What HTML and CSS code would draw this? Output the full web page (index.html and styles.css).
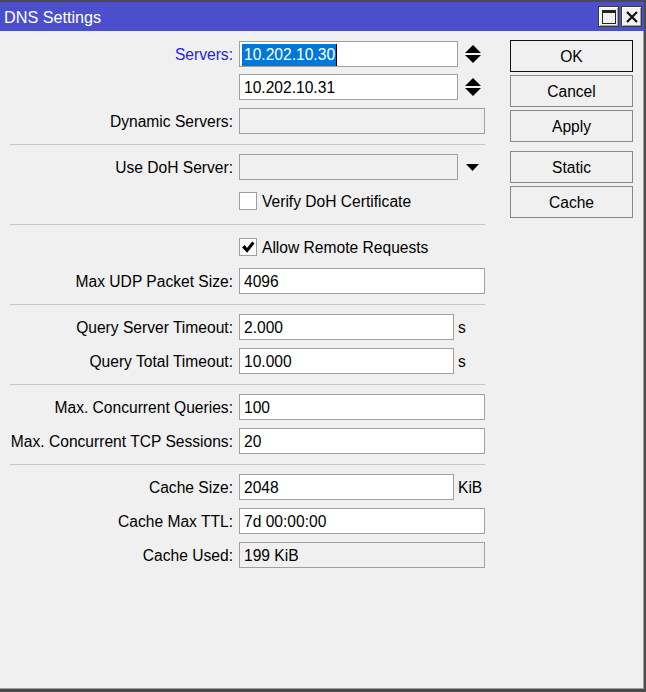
FILE: index.html
```html
<!DOCTYPE html>
<html>
<head>
<meta charset="utf-8">
<link rel="stylesheet" href="styles.css">
</head>
<body>
<div class="window">
  <div class="titlebar">
    <span class="title">DNS Settings</span>
    <div class="tbtns">
      <span class="tbtn"><svg width="14" height="14" viewBox="0 0 14 14"><rect x="0.5" y="0.5" width="13" height="13" fill="none" stroke="#222" stroke-width="1"/><rect x="0" y="0" width="14" height="3" fill="#222"/></svg></span>
      <span class="tbtn"><svg width="12" height="12" viewBox="0 0 12 12"><path d="M1 1 L11 11 M11 1 L1 11" stroke="#111" stroke-width="2.2"/></svg></span>
    </div>
  </div>
  <div class="body">
    <div class="form">
      <div class="row first">
        <span class="lbl blue">Servers:</span>
        <div class="field">
          <div class="input w-spin"><span class="sel">10.202.10.30</span><span class="caret"></span></div>
          <svg class="spin" width="16" height="18" viewBox="0 0 16 18"><polygon points="8,0 16,8 0,8" fill="#000"/><polygon points="0,10 16,10 8,18" fill="#000"/></svg>
        </div>
      </div>
      <div class="row">
        <span class="lbl"></span>
        <div class="field">
          <div class="input w-spin">10.202.10.31</div>
          <svg class="spin" width="16" height="18" viewBox="0 0 16 18"><polygon points="8,0 16,8 0,8" fill="#000"/><polygon points="0,10 16,10 8,18" fill="#000"/></svg>
        </div>
      </div>
      <div class="row">
        <span class="lbl">Dynamic Servers:</span>
        <div class="field"><div class="input w-full disabled"></div></div>
      </div>
      <div class="sep"></div>
      <div class="row">
        <span class="lbl">Use DoH Server:</span>
        <div class="field">
          <div class="input w-spin disabled"></div>
          <svg class="drop" width="13" height="7" viewBox="0 0 13 7"><polygon points="0,0 13,0 6.5,7" fill="#000"/></svg>
        </div>
      </div>
      <div class="row">
        <span class="lbl"></span>
        <div class="field"><span class="check"></span><span class="ctext">Verify DoH Certificate</span></div>
      </div>
      <div class="sep"></div>
      <div class="row">
        <span class="lbl"></span>
        <div class="field"><span class="check"><svg width="16" height="16" viewBox="0 0 16 16"><polygon points="2,8.5 4.8,6 7,9 12.2,2.5 14.5,4.5 7.2,13.8" fill="#000"/></svg></span><span class="ctext">Allow Remote Requests</span></div>
      </div>
      <div class="row">
        <span class="lbl">Max UDP Packet Size:</span>
        <div class="field"><div class="input w-full">4096</div></div>
      </div>
      <div class="sep"></div>
      <div class="row">
        <span class="lbl">Query Server Timeout:</span>
        <div class="field"><div class="input w-unit">2.000</div><span class="unit">s</span></div>
      </div>
      <div class="row">
        <span class="lbl">Query Total Timeout:</span>
        <div class="field"><div class="input w-unit">10.000</div><span class="unit">s</span></div>
      </div>
      <div class="sep"></div>
      <div class="row">
        <span class="lbl">Max. Concurrent Queries:</span>
        <div class="field"><div class="input w-full">100</div></div>
      </div>
      <div class="row">
        <span class="lbl">Max. Concurrent TCP Sessions:</span>
        <div class="field"><div class="input w-full">20</div></div>
      </div>
      <div class="sep"></div>
      <div class="row">
        <span class="lbl">Cache Size:</span>
        <div class="field"><div class="input w-unit">2048</div><span class="unit">KiB</span></div>
      </div>
      <div class="row">
        <span class="lbl">Cache Max TTL:</span>
        <div class="field"><div class="input w-full">7d 00:00:00</div></div>
      </div>
      <div class="row">
        <span class="lbl">Cache Used:</span>
        <div class="field"><div class="input w-full disabled">199 KiB</div></div>
      </div>
    </div>
    <div class="buttons">
      <div class="btn default">OK</div>
      <div class="btn">Cancel</div>
      <div class="btn">Apply</div>
      <div class="btn gap">Static</div>
      <div class="btn">Cache</div>
    </div>
  </div>
</div>
</body>
</html>
```
FILE: styles.css
```css
* { box-sizing: border-box; }
html, body { margin: 0; padding: 0; }
body {
  width: 646px;
  height: 692px;
  overflow: hidden;
  background: #f0f0f0;
  font-family: "Liberation Sans", Arial, sans-serif;
  font-size: 15.6px;
  color: #000;
}
.window {
  width: 646px;
  height: 692px;
  background: #f0f0f0;
  border-top: 2px solid #4a4a4a;
  border-right: 2px solid #4a4a4a;
  border-bottom: 3px solid #4a4a4a;
  box-shadow: inset -1px -1px 0 #a0a0a0;
  display: flex;
  flex-direction: column;
}
.titlebar {
  height: 29px;
  background: #4b4fcc;
  display: flex;
  align-items: center;
  justify-content: space-between;
  padding: 0 2px 0 4px;
}
.title {
  color: #fff;
  font-size: 16.2px;
  padding-top: 2px;
}
.tbtns {
  display: flex;
  gap: 2px;
}
.tbtn {
  width: 21px;
  height: 21px;
  background: #f0f0f0;
  border: 1px solid #3a3a3a;
  box-shadow: inset 1px 1px 0 #fff, inset -1px -1px 0 #a0a0a0;
  display: flex;
  align-items: center;
  justify-content: center;
}
.body {
  display: flex;
  align-items: flex-start;
  padding-top: 10px;
}
.form {
  padding-left: 10px;
  width: 485px;
  display: flex;
  flex-direction: column;
}
.row {
  display: grid;
  grid-template-columns: 223px 246px;
  column-gap: 6px;
  height: 26px;
  align-items: center;
  margin-bottom: 8px;
}
.row.first { margin-bottom: 7px; }
.lbl {
  text-align: right;
  white-space: nowrap;
  padding-top: 2px;
}
.lbl.blue { color: #2222ee; }
.field {
  display: flex;
  align-items: center;
  height: 26px;
}
.input {
  height: 26px;
  border: 1px solid #a0a0a0;
  background: #fff;
  padding: 1px 4px 0 4px;
  display: flex;
  align-items: center;
  white-space: nowrap;
}
.input.disabled { background: #f0f0f0; }
.w-full { width: 246px; }
.w-spin { width: 219px; }
.w-unit { width: 215px; }
.sel {
  background: #0078d7;
  color: #fff;
  margin-left: -2px;
  padding: 2px 1px 2px 2px;
  line-height: 18px;
}
.caret {
  width: 1px;
  height: 22px;
  background: #000;
}
.spin { margin-left: 7px; }
.drop { margin-left: 8px; }
.unit { margin-left: 4px; padding-top: 2px; }
.check {
  width: 18px;
  height: 18px;
  border: 1px solid #a0a0a0;
  background: #fff;
  display: flex;
  align-items: center;
  justify-content: center;
}
.ctext { margin-left: 5px; padding-top: 2px; }
.sep {
  height: 1px;
  width: 475px;
  background: #c8c8c8;
  margin: 2px 0 9px 0;
}
.buttons {
  margin-left: 25px;
  margin-top: -1px;
  display: flex;
  flex-direction: column;
  gap: 3px;
}
.btn {
  width: 123px;
  height: 32px;
  border: 1px solid #888;
  background: #f0f0f0;
  display: flex;
  align-items: center;
  justify-content: center;
  padding-top: 2px;
}
.btn.default { border-color: #111; }
.btn.gap { margin-top: 6px; }
```
